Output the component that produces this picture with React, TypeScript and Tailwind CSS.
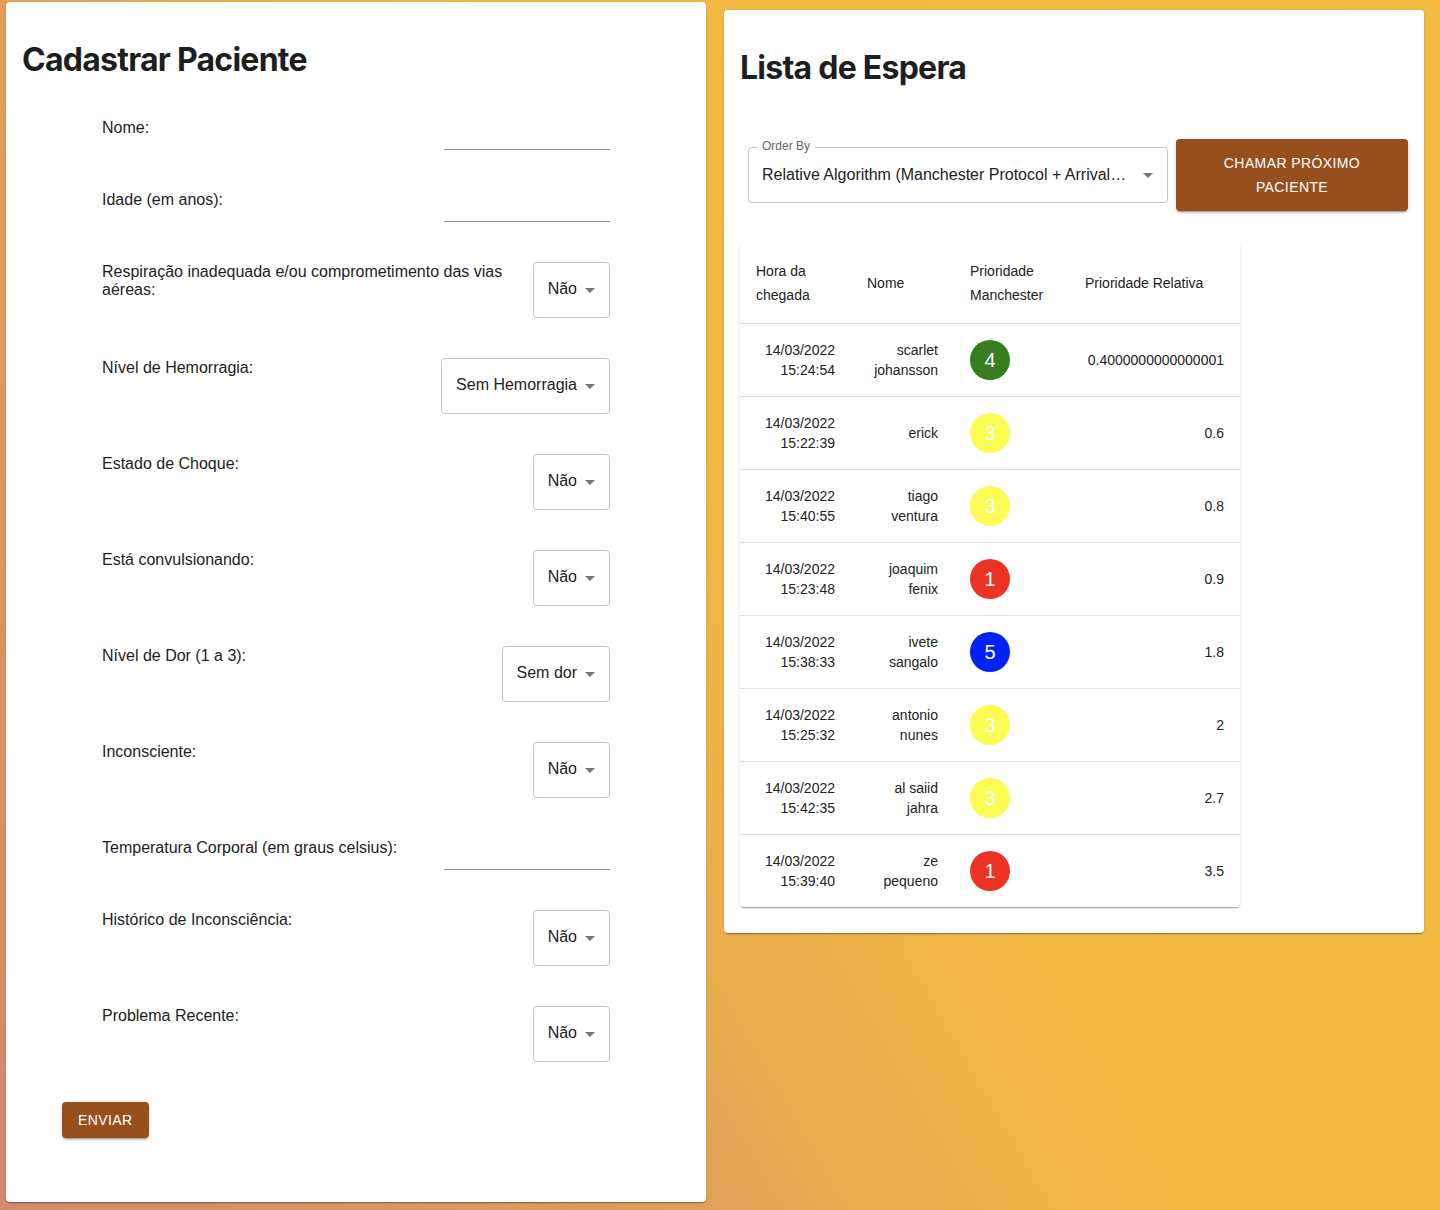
import React from 'react';

type Row = { label: string; kind: 'text' | 'select'; value?: string };

const formRows: Row[] = [
  { label: 'Nome:', kind: 'text' },
  { label: 'Idade (em anos):', kind: 'text' },
  { label: 'Respiração inadequada e/ou comprometimento das vias aéreas:', kind: 'select', value: 'Não' },
  { label: 'Nível de Hemorragia:', kind: 'select', value: 'Sem Hemorragia' },
  { label: 'Estado de Choque:', kind: 'select', value: 'Não' },
  { label: 'Está convulsionando:', kind: 'select', value: 'Não' },
  { label: 'Nível de Dor (1 a 3):', kind: 'select', value: 'Sem dor' },
  { label: 'Inconsciente:', kind: 'select', value: 'Não' },
  { label: 'Temperatura Corporal (em graus celsius):', kind: 'text' },
  { label: 'Histórico de Inconsciência:', kind: 'select', value: 'Não' },
  { label: 'Problema Recente:', kind: 'select', value: 'Não' },
];

const patients = [
  { date: '14/03/2022', time: '15:24:54', name: ['scarlet', 'johansson'], prio: 4, rel: '0.4000000000000001' },
  { date: '14/03/2022', time: '15:22:39', name: ['erick'], prio: 3, rel: '0.6' },
  { date: '14/03/2022', time: '15:40:55', name: ['tiago', 'ventura'], prio: 3, rel: '0.8' },
  { date: '14/03/2022', time: '15:23:48', name: ['joaquim', 'fenix'], prio: 1, rel: '0.9' },
  { date: '14/03/2022', time: '15:38:33', name: ['ivete', 'sangalo'], prio: 5, rel: '1.8' },
  { date: '14/03/2022', time: '15:25:32', name: ['antonio', 'nunes'], prio: 3, rel: '2' },
  { date: '14/03/2022', time: '15:42:35', name: ['al saiid', 'jahra'], prio: 3, rel: '2.7' },
  { date: '14/03/2022', time: '15:39:40', name: ['ze', 'pequeno'], prio: 1, rel: '3.5' },
];

// cores do protocolo de Manchester
const prioColor: Record<number, string> = {
  1: 'bg-[#eb3323]',
  2: 'bg-[#f08a24]',
  3: 'bg-[#fdfc54]',
  4: 'bg-[#367e22]',
  5: 'bg-[#0022f5]',
};

function Caret() {
  return (
    <svg viewBox="0 0 24 24" className="w-6 h-6 shrink-0 fill-[#757575]">
      <path d="M7 10l5 5 5-5z" />
    </svg>
  );
}

function SelectBox({ value }: { value: string }) {
  return (
    <div className="h-14 shrink-0 flex items-center pl-[14px] pr-[7px] gap-px border border-[#c4c4c4] rounded text-base text-[#222] bg-white">
      <span className="leading-[23px] mb-1 whitespace-nowrap">{value}</span>
      <Caret />
    </div>
  );
}

const cardShadow =
  'shadow-[0_2px_1px_-1px_rgba(0,0,0,0.2),0_1px_1px_0_rgba(0,0,0,0.14),0_1px_3px_0_rgba(0,0,0,0.12)]';

const btnShadow =
  'shadow-[0_3px_1px_-2px_rgba(0,0,0,0.2),0_2px_2px_0_rgba(0,0,0,0.14),0_1px_5px_0_rgba(0,0,0,0.12)]';

export default function App() {
  return (
    <div className="min-h-[1210px] w-full flex items-start gap-[18px] pl-[6px] pr-4 bg-[linear-gradient(60deg,#d38b70_0%,#e0a05a_33%,#e9ad4f_40%,#f3b842_55%,#f5ba40_100%)] font-['Liberation_Sans',Arial,sans-serif] text-[#222]">
      {/* cadastro */}
      <div className={`mt-[2px] w-[700px] bg-white rounded px-4 pt-[38px] pb-16 ${cardShadow}`}>
        <h1 className="font-['Inter',sans-serif] font-bold text-[32px] leading-10 tracking-[-0.75px] text-[#1e1e1e]">
          Cadastrar Paciente
        </h1>
        <form className="mt-[38px]" onSubmit={(e) => e.preventDefault()}>
          <div className="mx-20 flex flex-col gap-10">
            {formRows.map((r) => (
              <div key={r.label} className="flex items-start justify-between gap-4">
                <label className="flex-1 pt-px text-base leading-[18px]">{r.label}</label>
                {r.kind === 'select' ? (
                  <SelectBox value={r.value!} />
                ) : (
                  <div className="w-[166px] h-8 shrink-0 border-b border-[#8c8c8c]" />
                )}
              </div>
            ))}
          </div>
          <button type="submit" className={`mt-10 ml-10 h-9 px-4 rounded bg-[#974f1e] text-white text-sm font-medium tracking-[0.4px] uppercase ${btnShadow}`}>
            Enviar
          </button>
        </form>
      </div>

      {/* lista de espera */}
      <div className={`mt-[10px] w-[700px] bg-white rounded px-4 pt-[38px] pb-[26px] ${cardShadow}`}>
        <h1 className="font-['Inter',sans-serif] font-bold text-[32px] leading-10 tracking-[-0.75px] text-[#1e1e1e]">
          Lista de Espera
        </h1>

        <div className="mt-[51px] flex items-center gap-2">
          <div className="relative ml-2 w-[420px] h-14 border border-[#c4c4c4] rounded flex items-center pl-[13px] pr-[7px] gap-px">
            <span className="absolute -top-[10px] left-[8px] px-[5px] bg-white text-xs leading-4 text-[#666]">Order By</span>
            <span className="flex-1 overflow-hidden whitespace-nowrap text-base leading-[23px] mb-0.5">
              Relative Algorithm (Manchester Protocol + Arrival…
            </span>
            <Caret />
          </div>
          <button className={`w-[232px] h-[72px] rounded bg-[#974f1e] text-white text-sm font-medium tracking-[0.4px] leading-6 ${btnShadow}`}>
            <span className="block">CHAMAR PRÓXIMO</span>
            <span className="block">PACIENTE</span>
          </button>
        </div>

        <div className={`mt-8 w-[500px] rounded bg-white text-sm ${cardShadow}`}>
          <div className="grid grid-cols-[111px_103px_115px_171px] h-[81px] items-center border-b border-[#e0e0e0] leading-6">
            <div className="px-4">Hora da chegada</div>
            <div className="px-4">Nome</div>
            <div className="px-4">Prioridade Manchester</div>
            <div className="px-4">Prioridade Relativa</div>
          </div>
          {patients.map((p, i) => (
            <div
              key={i}
              className={`grid grid-cols-[111px_103px_115px_171px] items-center py-4 leading-5 ${i < patients.length - 1 ? 'border-b border-[#e0e0e0]' : ''}`}
            >
              <div className="px-4 text-right">
                <span className="block">{p.date}</span>
                <span className="block">{p.time}</span>
              </div>
              <div className="px-4 text-right">
                {p.name.map((n) => (
                  <span key={n} className="block">{n}</span>
                ))}
              </div>
              <div className="px-4">
                <div className={`w-10 h-10 rounded-full flex items-center justify-center text-white text-xl ${prioColor[p.prio]}`}>
                  {p.prio}
                </div>
              </div>
              <div className="px-4 text-right">{p.rel}</div>
            </div>
          ))}
        </div>
      </div>
    </div>
  );
}
